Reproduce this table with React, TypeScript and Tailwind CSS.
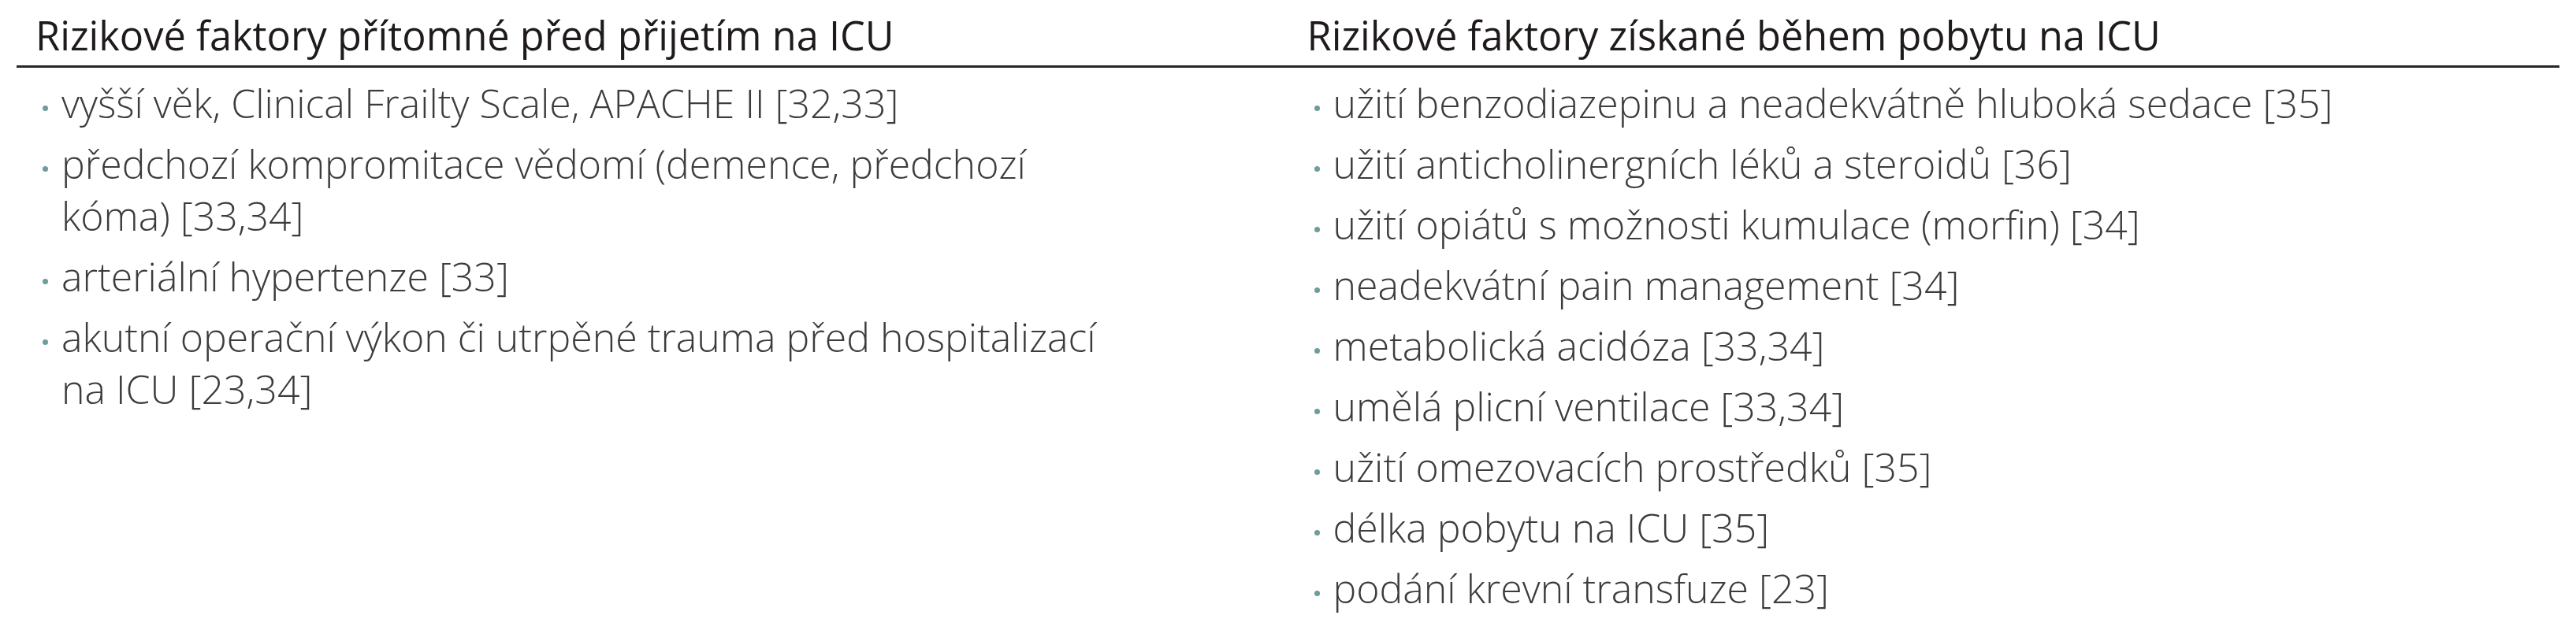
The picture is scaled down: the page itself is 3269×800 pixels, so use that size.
const beforeAdmission = [
  'vyšší věk, Clinical Frailty Scale, APACHE II [32,33]',
  'předchozí kompromitace vědomí (demence, předchozí kóma) [33,34]',
  'arteriální hypertenze [33]',
  'akutní operační výkon či utrpěné trauma před hospitalizací na ICU [23,34]',
];

const duringStay = [
  'užití benzodiazepinu a neadekvátně hluboká sedace [35]',
  'užití anticholinergních léků a steroidů [36]',
  'užití opiátů s možnosti kumulace (morfin) [34]',
  'neadekvátní pain management [34]',
  'metabolická acidóza [33,34]',
  'umělá plicní ventilace [33,34]',
  'užití omezovacích prostředků [35]',
  'délka pobytu na ICU [35]',
  'podání krevní transfuze [23]',
];

function FactorList({ items }: { items: string[] }) {
  return (
    <ul className="flex flex-col gap-[11px]">
      {items.map((item) => (
        <li key={item} className="flex">
          <span className="w-[33px] shrink-0">
            <span className="mt-[36px] ml-[9px] block size-[7px] rounded-full bg-[#6f9c9c]" />
          </span>
          <span className="max-w-[1335px] text-[50px] leading-[66px] font-light text-[#3c3c3c]">{item}</span>
        </li>
      ))}
    </ul>
  );
}

export default function App() {
  return (
    <div className="h-[800px] w-full bg-white px-[21px] font-['Open_Sans',sans-serif]">
      <div className="grid grid-cols-2 border-b-[3px] border-[#262626] pt-[12px] pb-[5px]">
        <h2 className="pl-[24px] text-[50.5px] leading-[66px] font-normal text-[#1e1b1a]">
          Rizikové faktory přítomné před přijetím na ICU
        </h2>
        <h2 className="pl-[24px] text-[50.5px] leading-[66px] font-normal text-[#1e1b1a]">
          Rizikové faktory získané během pobytu na ICU
        </h2>
      </div>
      <div className="grid grid-cols-2 pt-[12px]">
        <div className="pl-[24px]">
          <FactorList items={beforeAdmission} />
        </div>
        <div className="pl-[24px]">
          <FactorList items={duringStay} />
        </div>
      </div>
    </div>
  );
}
